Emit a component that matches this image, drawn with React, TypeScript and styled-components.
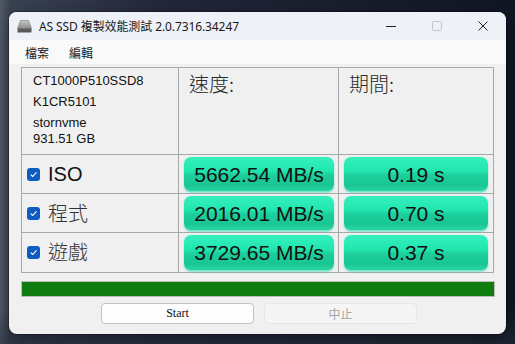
import React from "react";
import styled, { createGlobalStyle } from "styled-components";

const Global = createGlobalStyle`
  html, body { margin: 0; padding: 0; }
  body { width: 515px; height: 344px; overflow: hidden; }
`;

const Desktop = styled.div`
  width: 515px;
  height: 344px;
  box-sizing: border-box;
  padding: 12px 9px 10px 9px;
  background:
    linear-gradient(180deg, rgba(0,0,0,0) 0%, rgba(0,0,0,0) 90%, rgba(40,46,60,0.6) 100%),
    linear-gradient(90deg, #525a68 0%, #3a4252 2%, #23293a 30%, #171d2c 70%, #101624 100%);
  font-family: "Liberation Sans", Arial, "Noto Sans CJK TC", sans-serif;
`;

const Window = styled.div`
  width: 497px;
  height: 322px;
  border-radius: 8px;
  overflow: hidden;
  background: #f0f0f0;
  display: flex;
  flex-direction: column;
  box-shadow: 0 0 0 1px rgba(0, 0, 0, 0.25), 0 4px 14px rgba(0, 0, 0, 0.4);
`;

const TitleBar = styled.div`
  height: 28px;
  display: flex;
  align-items: center;
  padding-left: 8px;
  background: #eef1f7;
`;

const TitleText = styled.span`
  margin-left: 7px;
  font-family: "Noto Sans", "Noto Sans CJK TC", sans-serif;
  font-size: 12px;
  color: #1a1a1a;
  flex: 1;
  white-space: nowrap;
  letter-spacing: -0.1px;
`;

const Controls = styled.div`
  display: flex;
  height: 100%;
`;

const ControlBtn = styled.div`
  width: 46px;
  height: 100%;
  display: flex;
  align-items: center;
  justify-content: center;
`;

const MenuBar = styled.div`
  height: 24px;
  display: flex;
  align-items: center;
  gap: 20px;
  padding-left: 16px;
  background: #f9f9f9;
  font-family: "Noto Sans CJK TC", sans-serif;
  font-size: 12px;
  color: #1a1a1a;
`;

const Body = styled.div`
  padding: 3px 12px 0 12px;
  display: flex;
  flex-direction: column;
`;

const Table = styled.div`
  width: 473px;
  box-sizing: border-box;
  display: grid;
  grid-template-columns: 156px 159px 154px;
  grid-template-rows: 86px 38px 38px 39px;
  gap: 1px;
  border: 1px solid #a8a8a8;
  background: #a8a8a8;
`;

const Cell = styled.div`
  background: #f0f0f0;
  box-sizing: border-box;
`;

const InfoCell = styled(Cell)`
  padding: 5px 0 0 11px;
  font-size: 13px;
  color: #111;
  display: flex;
  flex-direction: column;
`;

const InfoLine = styled.div<{ $gap: number }>`
  line-height: 16px;
  margin-bottom: ${(p) => p.$gap}px;
  white-space: nowrap;
`;

const HeaderCell = styled(Cell)`
  padding: 3px 0 0 10px;
  font-family: "Noto Sans CJK TC", sans-serif;
  font-weight: 300;
  font-size: 20px;
  line-height: 26px;
  color: #2a2a2a;
`;

const LabelCell = styled(Cell)`
  display: flex;
  align-items: center;
  padding-left: 5px;
  gap: 8px;
`;

const Check = styled.div`
  width: 13px;
  height: 13px;
  border-radius: 3px;
  background: #0f5cc0;
  display: flex;
  align-items: center;
  justify-content: center;
`;

const Label = styled.span<{ $cjk?: boolean }>`
  font-family: ${(p) =>
    p.$cjk ? `"Noto Sans CJK TC", sans-serif` : `"Liberation Sans", Arial, sans-serif`};
  font-weight: ${(p) => (p.$cjk ? 300 : 400)};
  font-size: 20px;
  color: ${(p) => (p.$cjk ? "#333" : "#111")};
  margin-top: ${(p) => (p.$cjk ? -2 : 0)}px;
`;

const ResultCell = styled(Cell)<{ $left: number; $right: number }>`
  padding: 2px ${(p) => p.$right}px 1px ${(p) => p.$left}px;
  display: flex;
`;

const ResultBox = styled.div`
  flex: 1;
  border-radius: 7px;
  display: flex;
  align-items: center;
  justify-content: center;
  background: linear-gradient(
    180deg,
    #34f0bf 0%,
    #22e6ae 40%,
    #1ccf9c 52%,
    #19c693 80%,
    #2bd8a6 100%
  );
  box-shadow: 0 1px 2px rgba(60, 210, 170, 0.55), inset 0 -1px 0 rgba(170, 245, 220, 0.6);
  font-family: "Liberation Sans", Arial, sans-serif;
  font-size: 21px;
  color: #111;
  white-space: nowrap;
`;

const Progress = styled.div`
  margin-top: 8px;
  width: 474px;
  height: 16px;
  box-sizing: border-box;
  border: 1px solid #bcbcbc;
  background: #107c10;
`;

const ButtonRow = styled.div`
  margin-top: 6px;
  display: flex;
  justify-content: center;
  gap: 10px;
  padding-left: 3px;
`;

const Button = styled.div<{ $disabled?: boolean }>`
  width: 153px;
  height: 21px;
  box-sizing: border-box;
  border-radius: 4px;
  display: flex;
  align-items: center;
  justify-content: center;
  font-size: 12px;
  background: ${(p) => (p.$disabled ? "#f5f5f5" : "#fdfdfd")};
  border: 1px solid ${(p) => (p.$disabled ? "#e6e6e6" : "#c2c2c2")};
  color: ${(p) => (p.$disabled ? "#a3a3a3" : "#111")};
  font-family: ${(p) =>
    p.$disabled ? `"Noto Sans CJK TC", sans-serif` : `"Liberation Serif", "Times New Roman", serif`};
`;

const AppIcon = () => (
  <svg width="15" height="13" viewBox="0 0 15 13">
    <defs>
      <linearGradient id="dg" x1="0" y1="0" x2="0" y2="1">
        <stop offset="0" stopColor="#c8c8c8" />
        <stop offset="1" stopColor="#8a8a8a" />
      </linearGradient>
    </defs>
    <path d="M3.5 0.5 H11.5 L14.5 8.5 H0.5 Z" fill="url(#dg)" stroke="#7a7a7a" strokeWidth="0.6" />
    <rect x="0.5" y="8.5" width="14" height="4" rx="0.6" fill="#5a5a5a" />
  </svg>
);

const CheckMark = () => (
  <svg width="9" height="9" viewBox="0 0 9 9">
    <path d="M2 4.8 L3.8 6.5 L7.2 2.6" fill="none" stroke="#fff" strokeWidth="1.1" strokeLinecap="round" strokeLinejoin="round" />
  </svg>
);

const rows = [
  { label: "ISO", cjk: false, speed: "5662.54 MB/s", time: "0.19 s" },
  { label: "程式", cjk: true, speed: "2016.01 MB/s", time: "0.70 s" },
  { label: "遊戲", cjk: true, speed: "3729.65 MB/s", time: "0.37 s" },
];

export default function App() {
  return (
    <>
      <Global />
      <Desktop>
        <Window>
          <TitleBar>
            <AppIcon />
            <TitleText>AS SSD 複製效能測試 2.0.7316.34247</TitleText>
            <Controls>
              <ControlBtn>
                <svg width="10" height="10" viewBox="0 0 10 10">
                  <path d="M0 5.5 H10" stroke="#222" strokeWidth="1" />
                </svg>
              </ControlBtn>
              <ControlBtn>
                <svg width="10" height="10" viewBox="0 0 10 10">
                  <rect x="0.5" y="0.5" width="9" height="9" rx="1" fill="none" stroke="#c4c4c4" strokeWidth="1" />
                </svg>
              </ControlBtn>
              <ControlBtn>
                <svg width="10" height="10" viewBox="0 0 10 10">
                  <path d="M0.5 0.5 L9.5 9.5 M9.5 0.5 L0.5 9.5" stroke="#222" strokeWidth="1" />
                </svg>
              </ControlBtn>
            </Controls>
          </TitleBar>
          <MenuBar>
            <span>檔案</span>
            <span>編輯</span>
          </MenuBar>
          <Body>
            <Table>
              <InfoCell>
                <InfoLine $gap={5}>CT1000P510SSD8</InfoLine>
                <InfoLine $gap={5}>K1CR5101</InfoLine>
                <InfoLine $gap={0}>stornvme</InfoLine>
                <InfoLine $gap={0}>931.51 GB</InfoLine>
              </InfoCell>
              <HeaderCell>速度:</HeaderCell>
              <HeaderCell>期間:</HeaderCell>
              {rows.map((r) => (
                <React.Fragment key={r.label}>
                  <LabelCell>
                    <Check>
                      <CheckMark />
                    </Check>
                    <Label $cjk={r.cjk}>{r.label}</Label>
                  </LabelCell>
                  <ResultCell $left={5} $right={4}>
                    <ResultBox>{r.speed}</ResultBox>
                  </ResultCell>
                  <ResultCell $left={5} $right={5}>
                    <ResultBox>{r.time}</ResultBox>
                  </ResultCell>
                </React.Fragment>
              ))}
            </Table>
            <Progress />
            <ButtonRow>
              <Button>Start</Button>
              <Button $disabled>中止</Button>
            </ButtonRow>
          </Body>
        </Window>
      </Desktop>
    </>
  );
}
